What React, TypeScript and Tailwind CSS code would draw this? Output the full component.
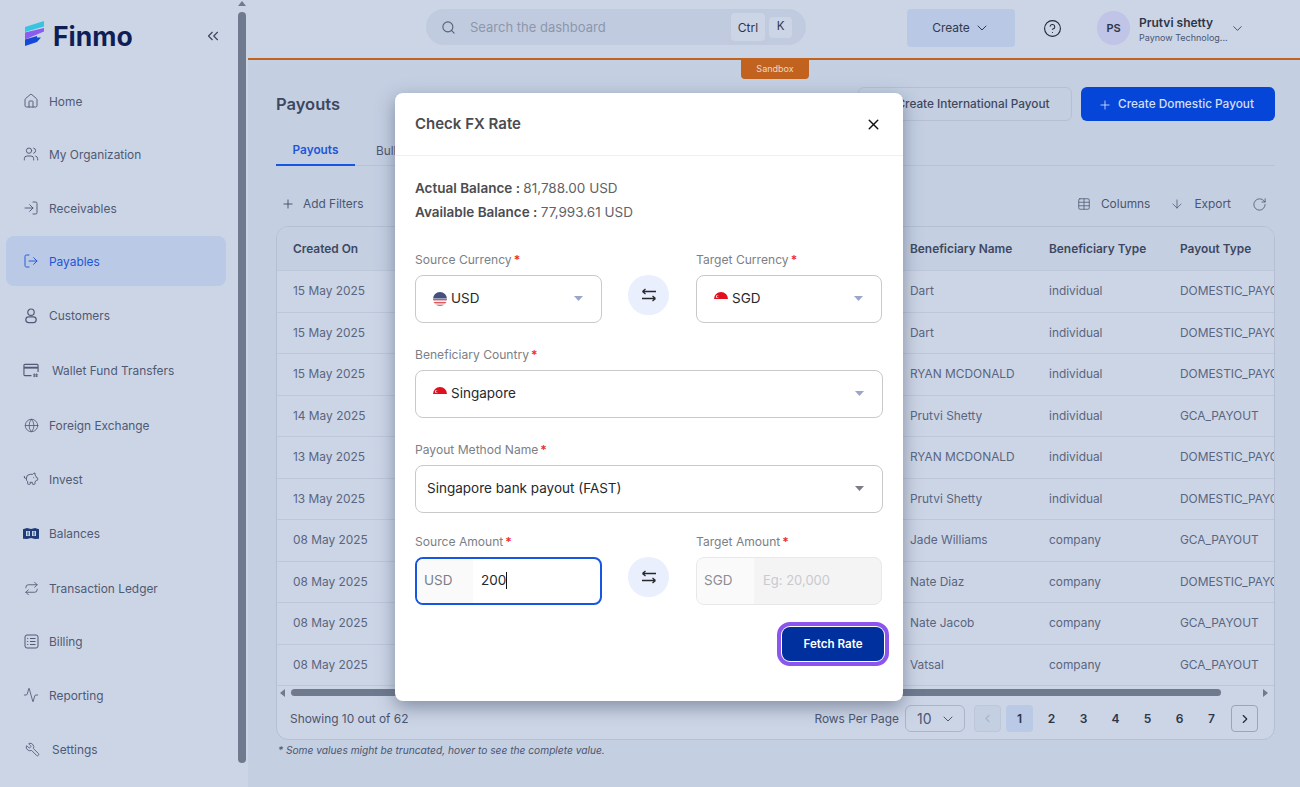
import {
  Activity,
  ArrowDown,
  ChevronDown,
  ChevronLeft,
  ChevronRight,
  ChevronsLeft,
  CircleHelp,
  Globe,
  House,
  LogIn,
  LogOut,
  PiggyBank,
  Plus,
  Repeat,
  RotateCw,
  Search,
  Table,
  Users,
  Wrench,
  X,
} from 'lucide-react';
import type { ReactNode } from 'react';

// icons the packages don't have
function CustomerIcon() {
  return (
    <svg width="17" height="17" viewBox="0 0 17 17" fill="none" stroke="currentColor" strokeWidth="1.3">
      <circle cx="8.5" cy="5" r="3.4" />
      <rect x="3" y="10" width="11" height="6" rx="3" />
    </svg>
  );
}

function WalletIcon() {
  return (
    <svg width="17" height="15" viewBox="0 0 17 15" fill="none" stroke="currentColor" strokeWidth="1.2">
      <path d="M9 13H2a1 1 0 0 1-1-1V2a1 1 0 0 1 1-1h13a1 1 0 0 1 1 1v7" />
      <path d="M1 4.5h15" strokeWidth="2" />
      <path d="M12 10.5v4M14.5 10.5v4M10.8 12h5M10.8 13.5h5" strokeWidth="0.8" />
    </svg>
  );
}

function BalancesIcon() {
  return (
    <svg width="16" height="11" viewBox="0 0 16 11">
      <path d="M0 1.2 4 0l4 1 4-1 4 1.2v9.6L12 11l-4-1-4 1-4-.2z" fill="#1f3c78" />
      <rect x="3" y="3" width="4" height="5" fill="#ccd5e6" />
      <rect x="9" y="3" width="4" height="5" fill="#ccd5e6" />
      <rect x="4.5" y="3.5" width="1" height="4" fill="#1f3c78" />
      <rect x="10.5" y="3.5" width="1" height="4" fill="#1f3c78" />
    </svg>
  );
}

function BillingIcon() {
  return (
    <svg width="15" height="15" viewBox="0 0 15 15" fill="none" stroke="currentColor" strokeWidth="1">
      <rect x="1" y="1" width="13" height="13" rx="2" />
      <path d="M6 4.5h5.5M6 7.5h5.5M6 10.5h5.5M3.2 4.5h1M3.2 7.5h1M3.2 10.5h1" />
    </svg>
  );
}

function SwapIcon() {
  return (
    <svg width="16" height="14" viewBox="0 0 16 14" fill="none" stroke="currentColor" strokeWidth="1.3">
      <path d="M15 3.500H1.500M1.500 3.500 4.500 1M1.500 3.500 4.500 6" />
      <path d="M1 10.500h13.500M14.500 10.500 11.500 8M14.500 10.500 11.500 13" />
    </svg>
  );
}

function Logo() {
  return (
    <svg width="20" height="26" viewBox="0 0 20 26">
      <path d="M0 6 19 0v5.500L0 11z" fill="#35c5e0" />
      <path d="M0 11.500 19 7v3.500L0 18.500z" fill="#8b5cf0" />
      <path d="M0 18.500 12 15v1.500h4L12 21 0 25z" fill="#1449d8" />
    </svg>
  );
}

function UsFlag() {
  return (
    <svg width="14" height="14" viewBox="0 0 14 14">
      <defs>
        <clipPath id="us">
          <circle cx="7" cy="7" r="7" />
        </clipPath>
      </defs>
      <g clipPath="url(#us)">
        <rect width="14" height="14" fill="#f4f4f6" />
        <rect y="7" width="14" height="1.400" fill="#d65a5f" />
        <rect y="10" width="14" height="1.400" fill="#d65a5f" />
        <rect y="12.700" width="14" height="1.400" fill="#d65a5f" />
        <rect width="14" height="6.500" fill="#45507e" />
      </g>
    </svg>
  );
}

function SgFlag() {
  return (
    <svg width="14" height="14" viewBox="0 0 14 14">
      <path d="M0 7A7 7 0 0 1 14 7z" fill="#e2101f" />
      <circle cx="3.500" cy="4.500" r="1.500" fill="#fff" />
      <circle cx="4.200" cy="4.500" r="1.300" fill="#e2101f" />
    </svg>
  );
}

const navItems: { label: string; icon: ReactNode; gap: string; pad?: string; active?: boolean }[] = [
  { label: 'Home', icon: <House size={16} strokeWidth={1.4} />, gap: 'mt-0' },
  { label: 'My Organization', icon: <Users size={16} strokeWidth={1.4} />, gap: 'mt-[3px]' },
  { label: 'Receivables', icon: <LogIn size={16} strokeWidth={1.4} />, gap: 'mt-[4px]' },
  { label: 'Payables', icon: <LogOut size={16} strokeWidth={1.4} />, gap: 'mt-[3px]', active: true },
  { label: 'Customers', icon: <CustomerIcon />, gap: 'mt-[4px]' },
  { label: 'Wallet Fund Transfers', icon: <WalletIcon />, gap: 'mt-[5px]', pad: 'gap-[13px]' },
  { label: 'Foreign Exchange', icon: <Globe size={15} strokeWidth={1.3} />, gap: 'mt-[5px]' },
  { label: 'Invest', icon: <PiggyBank size={16} strokeWidth={1.4} />, gap: 'mt-[4px]' },
  { label: 'Balances', icon: <BalancesIcon />, gap: 'mt-[4px]' },
  { label: 'Transaction Ledger', icon: <Repeat size={15} strokeWidth={1.4} />, gap: 'mt-[5px]' },
  { label: 'Billing', icon: <BillingIcon />, gap: 'mt-[3px]' },
  { label: 'Reporting', icon: <Activity size={16} strokeWidth={1.3} />, gap: 'mt-[4px]' },
  { label: 'Settings', icon: <Wrench size={15} strokeWidth={1.4} className="-scale-x-100" />, gap: 'mt-[4px]', pad: 'gap-[12px] pl-[18px]' },
];

const rows = [
  ['15 May 2025', 'Dart', 'individual', 'DOMESTIC_PAYOUT'],
  ['15 May 2025', 'Dart', 'individual', 'DOMESTIC_PAYOUT'],
  ['15 May 2025', 'RYAN MCDONALD', 'individual', 'DOMESTIC_PAYOUT'],
  ['14 May 2025', 'Prutvi Shetty', 'individual', 'GCA_PAYOUT'],
  ['13 May 2025', 'RYAN MCDONALD', 'individual', 'DOMESTIC_PAYOUT'],
  ['13 May 2025', 'Prutvi Shetty', 'individual', 'DOMESTIC_PAYOUT'],
  ['08 May 2025', 'Jade Williams', 'company', 'GCA_PAYOUT'],
  ['08 May 2025', 'Nate Diaz', 'company', 'DOMESTIC_PAYOUT'],
  ['08 May 2025', 'Nate Jacob', 'company', 'GCA_PAYOUT'],
  ['08 May 2025', 'Vatsal', 'company', 'GCA_PAYOUT'],
];

function Sidebar() {
  return (
    <aside className="flex h-full w-[248px] shrink-0 bg-[#ccd5e6]">
      <div className="w-[238px] shrink-0">
        <div className="flex h-[76px] items-start pl-[25px] pt-[21px]">
          <Logo />
          <span className="ml-[8px] text-[26.500px] leading-[30px] font-bold text-[#0f1f55]">Finmo</span>
          <ChevronsLeft size={18} strokeWidth={1.5} className="ml-[71px] mt-[6px] text-[#39445c]" />
        </div>
        <nav className="flex flex-col px-[6px]">
          {navItems.map((item) => (
            <div
              key={item.label}
              className={`flex h-[50px] w-[220px] items-center rounded-lg pl-[17px] text-[11.900px] ${item.gap} ${item.pad ?? 'gap-[10px]'} ${
                item.active ? 'bg-[#bac9e5] text-[#1f56d8]' : 'text-[#4f5a75]'
              }`}
            >
              <span className="flex w-[16px] justify-center">{item.icon}</span>
              <span className="pt-[1px]">{item.label}</span>
            </div>
          ))}
        </nav>
      </div>
      <div className="relative w-[8px] shrink-0">
        <div className="mx-auto mt-[1px] h-0 w-0 border-x-[4px] border-b-[5px] border-x-transparent border-b-[#6f7a8f]" />
        <div className="mt-[6px] h-[751px] w-[8px] rounded-full bg-[#6f7a8f]" />
      </div>
    </aside>
  );
}

function Header() {
  return (
    <header className="relative flex h-[60px] shrink-0 items-start border-b-2 border-[#c1621f] bg-[#ccd5e6] pl-[178px] pt-[9px]">
      <div className="flex h-[36px] w-[380px] items-center rounded-full bg-[#c1cbdf] pl-[15px] text-[13px]">
        <Search size={15} strokeWidth={1.8} className="text-[#56617a]" />
        <span className="ml-[14px] pt-[2px] text-[#8c97ad]">Search the dashboard</span>
        <span className="ml-auto flex h-[28px] w-[34px] items-center justify-center rounded bg-[#ccd5e6] pt-[1px] text-[12px] text-[#2d3648]">Ctrl</span>
        <span className="ml-[4px] mr-[14px] flex h-[21px] w-[23px] items-center justify-center rounded bg-[#ccd5e6] text-[11.500px] text-[#2d3648]">K</span>
      </div>
      <button className="ml-[101px] flex h-[38px] w-[108px] items-center justify-center gap-[4px] rounded bg-[#b9c8e5] text-[12px] text-[#2f3a52]">
        Create <ChevronDown size={16} strokeWidth={1.5} />
      </button>
      <CircleHelp size={19} strokeWidth={1.4} className="ml-[28px] mt-[10px] text-[#1f2937]" />
      <div className="ml-[35px] mt-[2px] flex h-[34px] w-[33px] items-center justify-center rounded-full bg-[#c0c4e6] text-[11px] font-semibold text-[#2d3648]">PS</div>
      <div className="ml-[9px] mt-[6px] w-[90px]">
        <div className="text-[12px] leading-[16px] font-semibold text-[#2d3648]">Prutvi shetty</div>
        <div className="pt-[1px] text-[9px] leading-[12px] text-[#4b5670]">Paynow Technolog...</div>
      </div>
      <ChevronDown size={15} strokeWidth={1.3} className="ml-[1px] mt-[12px] text-[#2d3648]" />
      <div className="absolute left-[493px] top-[58px] flex h-[21px] w-[68px] items-center justify-center rounded-b bg-[#c1621f] text-[9px] text-[#ecd9c8]">Sandbox</div>
    </header>
  );
}

function PayoutsTable() {
  return (
    <div className="mt-[10px] h-[514px] overflow-hidden rounded-xl border border-[#b5c0d4] bg-[#ccd5e6]">
      <div className="grid h-[43px] grid-cols-[617px_139px_131px_1fr] items-center bg-[#c4cfe2] pl-[16px] text-[11.900px] font-semibold text-[#3d4860]">
        <span>Created On</span>
        <span>Beneficiary Name</span>
        <span>Beneficiary Type</span>
        <span>Payout Type</span>
      </div>
      {rows.map((row, i) => (
        <div
          key={i}
          className="grid h-[41.500px] grid-cols-[617px_139px_131px_1fr] items-center overflow-hidden border-t border-[#bcc7da] pl-[16px] text-[11.900px] text-[#5a6580]"
        >
          {row.map((cell, j) => (
            <span key={j} className="whitespace-nowrap">
              {cell}
            </span>
          ))}
        </div>
      ))}
      <div className="flex h-[14px] items-center border-t border-[#bcc7da] px-[3px]">
        <div className="h-0 w-0 border-y-[4px] border-r-[5px] border-y-transparent border-r-[#6f7a8f]" />
        <div className="ml-[6px] h-[7px] w-[930px] rounded-full bg-[#6f7a8f]" />
        <div className="ml-auto mr-[3px] h-0 w-0 border-y-[4px] border-l-[5px] border-y-transparent border-l-[#6f7a8f]" />
      </div>
      <div className="flex items-center pl-[13px] pt-[6px] text-[11.900px] text-[#4b5670]">
        <span>Showing 10 out of 62</span>
        <span className="ml-auto">Rows Per Page</span>
        <div className="ml-[6px] flex h-[27px] w-[60px] items-center justify-between rounded-md border border-[#aab5ca] pl-[11px] pr-[8px] text-[14px]">
          10 <ChevronDown size={16} strokeWidth={1.5} />
        </div>
        <div className="ml-[9px] flex h-[27px] w-[27px] items-center justify-center rounded border border-[#bcc7da] bg-[#c4cfe2] text-[#aab5ca]">
          <ChevronLeft size={13} />
        </div>
        <div className="ml-[5px] flex items-center gap-[5px] text-[12px] font-semibold text-[#2d3648]">
          {[1, 2, 3, 4, 5, 6, 7].map((n) => (
            <span key={n} className={`flex h-[27px] w-[27px] items-center justify-center rounded ${n === 1 ? 'bg-[#bac9e5]' : ''}`}>
              {n}
            </span>
          ))}
        </div>
        <div className="ml-[6px] mr-[16px] flex h-[27px] w-[27px] items-center justify-center rounded border border-[#9aa5bb] text-[#1f2937]">
          <ChevronRight size={14} strokeWidth={2} />
        </div>
      </div>
    </div>
  );
}

function Field({ label, children, className }: { label: string; children: ReactNode; className: string }) {
  return (
    <div className={className}>
      <div className="text-[12.100px] leading-[16px] text-[#7b7f87]">
        {label}
        <span className="ml-[2px] font-semibold text-[#ef2b2b]">*</span>
      </div>
      {children}
    </div>
  );
}

function SelectBox({ children, arrow = '#9ba6cc', pad = 'pl-[17px]' }: { children: ReactNode; arrow?: string; pad?: string }) {
  return (
    <div className={`mt-[7px] flex h-[48px] items-center justify-between rounded-lg border border-[#c9c9cc] pb-[1px] pr-[18px] text-[13.500px] text-[#26282c] ${pad}`}>
      <span className="flex items-center gap-[4px]">{children}</span>
      <svg width="9" height="5" viewBox="0 0 9 5">
        <path d="M0 0h9L4.500 5z" fill={arrow} />
      </svg>
    </div>
  );
}

function SwapButton() {
  return (
    <div className="ml-[26px] mr-[27px] mt-[23px] flex h-[40px] w-[41px] shrink-0 items-center justify-center rounded-full bg-[#e9effc] text-[#26282c]">
      <SwapIcon />
    </div>
  );
}

function FxModal() {
  return (
    <div className="absolute left-[395px] top-[93px] h-[608px] w-[508px] rounded-lg bg-white shadow-[0_6px_18px_rgba(60,72,100,0.5)]">
      <div className="flex h-[63px] items-center justify-between border-b border-[#eeeff1] pl-[20px] pr-[21px]">
        <span className="text-[15px] font-semibold text-[#4a4c50]">Check FX Rate</span>
        <X size={17} strokeWidth={2} className="text-[#111]" />
      </div>
      <div className="pl-[20px] pr-[20px]">
        <div className="mt-[20px] text-[13.500px] leading-[24px] text-[#5f6267]">
          <div>
            <span className="font-semibold text-[#4a4c50]">Actual Balance : </span>81,788.00 USD
          </div>
          <div>
            <span className="font-semibold text-[#4a4c50]">Available Balance : </span>77,993.61 USD
          </div>
        </div>
        <div className="mt-[28px] flex items-start">
          <Field label="Source Currency" className="w-[187px]">
            <SelectBox>
              <UsFlag /> USD
            </SelectBox>
          </Field>
          <SwapButton />
          <Field label="Target Currency" className="w-[186px]">
            <SelectBox>
              <SgFlag /> SGD
            </SelectBox>
          </Field>
        </div>
        <Field label="Beneficiary Country" className="mt-[24px] w-[468px]">
          <SelectBox>
            <SgFlag /> Singapore
          </SelectBox>
        </Field>
        <Field label="Payout Method Name" className="mt-[24px] w-[468px]">
          <SelectBox arrow="#7a7d84" pad="pl-[11px]">
            Singapore bank payout (FAST)
          </SelectBox>
        </Field>
        <div className="mt-[21px] flex items-start">
          <Field label="Source Amount" className="w-[187px]">
            <div className="mt-[7px] flex h-[48px] overflow-hidden rounded-lg border-2 border-[#1756e0] text-[13.500px]">
              <span className="flex w-[56px] items-center bg-[#fafafa] pb-[1px] pl-[7px] text-[#7b7f87]">USD</span>
              <span className="flex items-center pb-[1px] pl-[8px] text-[#26282c]">
                200<span className="h-[17px] w-px bg-[#111]" />
              </span>
            </div>
          </Field>
          <SwapButton />
          <Field label="Target Amount" className="w-[186px]">
            <div className="mt-[7px] flex h-[48px] overflow-hidden rounded-lg border border-[#e8e8ea] bg-[#f4f4f5] text-[13.500px]">
              <span className="flex w-[57px] items-center bg-[#fafafa] pb-[1px] pl-[7px] text-[#8b8e94]">SGD</span>
              <span className="flex items-center pb-[1px] pl-[9px] text-[13px] text-[#c9cacd]">Eg: 20,000</span>
            </div>
          </Field>
        </div>
        <div className="mt-[17px] flex justify-end">
          <button className="-mr-[6px] flex h-[44px] w-[112px] items-center justify-center rounded-[13px] border-4 border-[#8b55ee] bg-white p-px">
            <span className="flex h-full w-full items-center justify-center rounded-lg bg-[#002f9e] pt-[2px] text-[11.600px] font-semibold text-white">Fetch Rate</span>
          </button>
        </div>
      </div>
    </div>
  );
}

export default function App() {
  return (
    <div className="relative flex h-[787px] w-[1300px] overflow-hidden bg-[#c4cfe2] [font-family:Inter,sans-serif]">
      <Sidebar />
      <main className="flex min-w-0 flex-1 flex-col">
        <Header />
        <div className="pl-[28px] pr-[25px] pt-[27px]">
          <div className="flex h-[34px] items-center justify-between">
            <h1 className="pt-[1px] text-[16.500px] font-semibold text-[#3d4860]">Payouts</h1>
            <div className="flex items-center gap-[9px] text-[11.800px] font-medium">
              <button className="flex h-[34px] w-[214px] items-center justify-center gap-[6px] rounded-md border border-[#b5c0d4] pr-[4px] pt-[1px] text-[#3d4860]">
                <Plus size={14} strokeWidth={1.5} /> Create International Payout
              </button>
              <button className="flex h-[34px] w-[194px] items-center justify-center gap-[6px] rounded-md bg-[#0546d8] pr-[4px] pt-[1px] text-[#d5def5]">
                <Plus size={14} strokeWidth={1.5} /> Create Domestic Payout
              </button>
            </div>
          </div>
          <div className="mt-[13px] flex h-[32px] border-b border-[#b8c3d8] text-[11.800px]">
            <span className="flex h-[32px] w-[79px] items-center justify-center border-b-2 border-[#1756e0] pt-[4px] font-semibold text-[#1f56d8]">Payouts</span>
            <span className="ml-[21px] flex items-center whitespace-nowrap pt-[4px] text-[#4b5670]">Bulk Payouts</span>
          </div>
          <div className="mt-[26px] flex h-[24px] items-center text-[11.900px] text-[#4b5670]">
            <Plus size={14} strokeWidth={1.5} className="ml-[5px] text-[#3d4860]" />
            <span className="ml-[8px]">Add Filters</span>
            <Table size={14} strokeWidth={1.3} className="ml-auto" />
            <span className="ml-[10px]">Columns</span>
            <ArrowDown size={14} strokeWidth={1.3} className="ml-[20px]" />
            <span className="ml-[10px]">Export</span>
            <RotateCw size={15} strokeWidth={1.3} className="ml-[21px] mr-[8px]" />
          </div>
          <PayoutsTable />
          <p className="ml-[2px] mt-[3px] text-[10.200px] italic text-[#4b5670]">* Some values might be truncated, hover to see the complete value.</p>
        </div>
      </main>
      <FxModal />
    </div>
  );
}
